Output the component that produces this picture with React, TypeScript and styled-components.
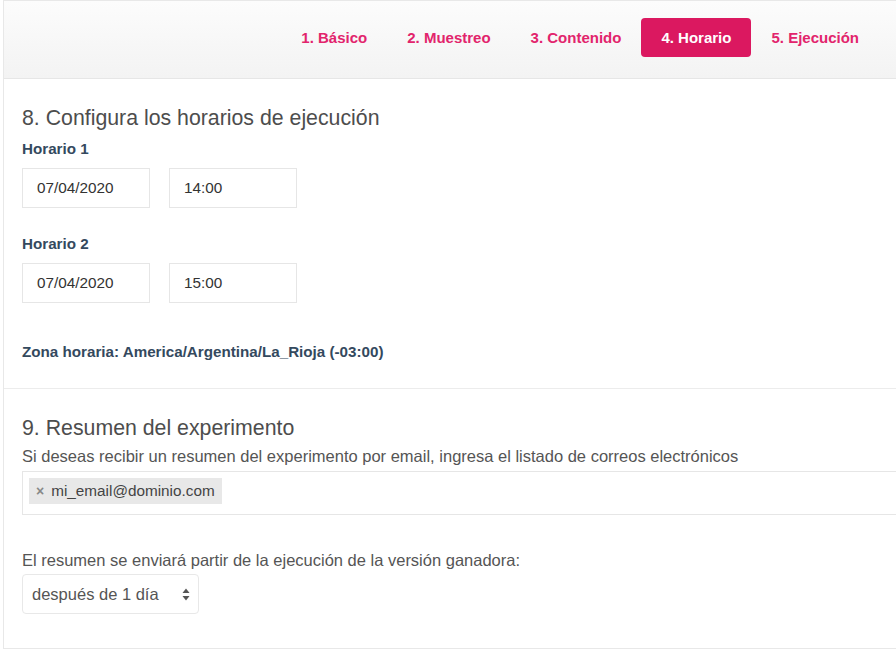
import React from 'react';
import styled, { createGlobalStyle } from 'styled-components';

const GlobalStyle = createGlobalStyle`
    html, body {
        margin: 0;
        padding: 0;
        background: #fff;
        overflow: hidden;
    }
    body {
        font-family: "Liberation Sans", Arial, Helvetica, sans-serif;
        color: #333;
    }
`;

const Page = styled.div`
    padding-left: 3px;
    width: 920px;
`;

const Card = styled.div`
    border: 1px solid #e8e8e8;
    border-right: none;
    background: #fff;
`;

const StepBar = styled.div`
    height: 78px;
    box-sizing: border-box;
    display: flex;
    align-items: center;
    justify-content: flex-end;
    padding: 0 44px 5px 0;
    background: linear-gradient(#fcfcfc, #f3f3f3);
    border-bottom: 1px solid #e6e6e6;
`;

const Step = styled.div<{ $active?: boolean }>`
    height: 39px;
    display: flex;
    align-items: center;
    padding: 0 20px;
    border-radius: 4px;
    font-size: 15px;
    font-weight: bold;
    color: ${(p) => (p.$active ? '#fff' : '#e2246c')};
    background: ${(p) => (p.$active ? '#db1860' : 'transparent')};
`;

const Section = styled.div<{ $last?: boolean }>`
    padding: 27px 18px ${(p) => (p.$last ? '34px' : '27px')};
    border-bottom: ${(p) => (p.$last ? 'none' : '1px solid #ececec')};
`;

const Title = styled.h2`
    margin: 0;
    font-size: 21.3px;
    line-height: 24px;
    font-weight: normal;
    color: #4d4d4d;
`;

const Label = styled.div<{ $gap: number }>`
    margin-top: ${(p) => p.$gap}px;
    font-size: 15.2px;
    line-height: 18px;
    font-weight: bold;
    color: #34495e;
`;

const FieldRow = styled.div`
    display: flex;
    gap: 19px;
    margin-top: 10px;
`;

const TextBox = styled.div`
    width: 128px;
    height: 40px;
    box-sizing: border-box;
    border: 1px solid #e6e6e6;
    padding: 0 14px;
    display: flex;
    align-items: center;
    font-size: 15.3px;
    color: #333;
`;

const Help = styled.div<{ $gap: number }>`
    margin-top: ${(p) => p.$gap}px;
    font-size: 16.5px;
    line-height: 20px;
    color: #555;
`;

const TagInput = styled.div`
    margin-top: 5px;
    height: 44px;
    box-sizing: border-box;
    border: 1px solid #e6e6e6;
    border-right: none;
    padding: 6px;
    display: flex;
    align-items: flex-start;
`;

const Tag = styled.span`
    height: 26px;
    display: inline-flex;
    align-items: center;
    gap: 7px;
    padding: 0 7px;
    background: #e8e8e8;
    font-size: 15.3px;
    color: #444;
`;

const TagRemove = styled.span`
    font-size: 14px;
    font-weight: bold;
    color: #888;
`;

const SelectBox = styled.div`
    margin-top: 4px;
    width: 177px;
    height: 40px;
    box-sizing: border-box;
    border: 1px solid #e8e8e8;
    border-radius: 4px;
    padding: 0 8px 0 9px;
    display: flex;
    align-items: center;
    justify-content: space-between;
    font-size: 16.5px;
    color: #555;
`;

const Arrows = () => (
    <svg width="8" height="13" viewBox="0 0 8 13">
        <path d="M4 0.5 L7.5 5 L0.5 5 Z" fill="#555" />
        <path d="M4 12.5 L7.5 8 L0.5 8 Z" fill="#555" />
    </svg>
);

const steps = ['1. Básico', '2. Muestreo', '3. Contenido', '4. Horario', '5. Ejecución'];

const schedules = [
    { name: 'Horario 1', date: '07/04/2020', time: '14:00' },
    { name: 'Horario 2', date: '07/04/2020', time: '15:00' },
];

export default function App() {
    return (
        <Page>
            <GlobalStyle />
            <Card>
                <StepBar>
                    {steps.map((s) => (
                        <Step key={s} $active={s === '4. Horario'}>
                            {s}
                        </Step>
                    ))}
                </StepBar>
                <Section>
                    <Title>8. Configura los horarios de ejecución</Title>
                    {schedules.map((h, i) => (
                        <React.Fragment key={h.name}>
                            <Label $gap={i === 0 ? 10 : 27}>{h.name}</Label>
                            <FieldRow>
                                <TextBox>{h.date}</TextBox>
                                <TextBox>{h.time}</TextBox>
                            </FieldRow>
                        </React.Fragment>
                    ))}
                    <Label $gap={40}>
                        Zona horaria: America/Argentina/La_Rioja (-03:00)
                    </Label>
                </Section>
                <Section $last>
                    <Title>9. Resumen del experimento</Title>
                    <Help $gap={6}>
                        Si deseas recibir un resumen del experimento por email, ingresa el
                        listado de correos electrónicos
                    </Help>
                    <TagInput>
                        <Tag>
                            <TagRemove>×</TagRemove>
                            mi_email@dominio.com
                        </Tag>
                    </TagInput>
                    <Help $gap={35}>
                        El resumen se enviará partir de la ejecución de la versión ganadora:
                    </Help>
                    <SelectBox>
                        <span>después de 1 día</span>
                        <Arrows />
                    </SelectBox>
                </Section>
            </Card>
        </Page>
    );
}
